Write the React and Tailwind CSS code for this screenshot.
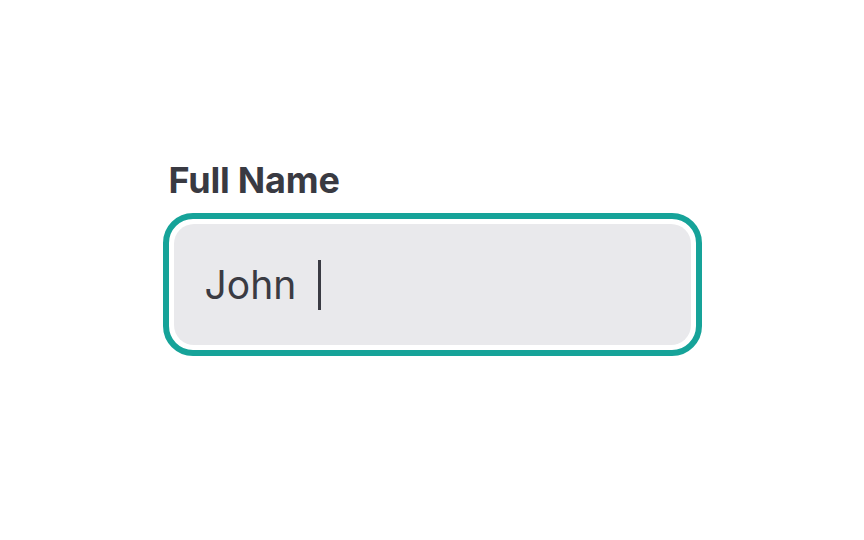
export default function App() {
  return (
    <div className="w-[864px] h-[540px] bg-white pt-[162px]" style={{ fontFamily: "Inter, 'Noto Sans', sans-serif" }}>
      <div className="w-[539px] mx-auto">
        <div className="pl-[6px] mb-[15px] text-[36px] leading-[36px] font-bold text-[#393a42] tracking-[-0.2px]">Full Name</div>
        <div className="h-[143px] border-[6px] border-[#16a399] rounded-[30px] p-[5px] bg-white">
          <div className="h-full rounded-[20px] bg-[#e9e9ec] flex items-center pl-[31px]">
            <span className="text-[39px] leading-[40px] text-[#3a3b43]">John</span>
            <span className="ml-[22px] w-[3px] h-[50px] bg-[#3a3b43]"></span>
          </div>
        </div>
      </div>
    </div>
  );
}
